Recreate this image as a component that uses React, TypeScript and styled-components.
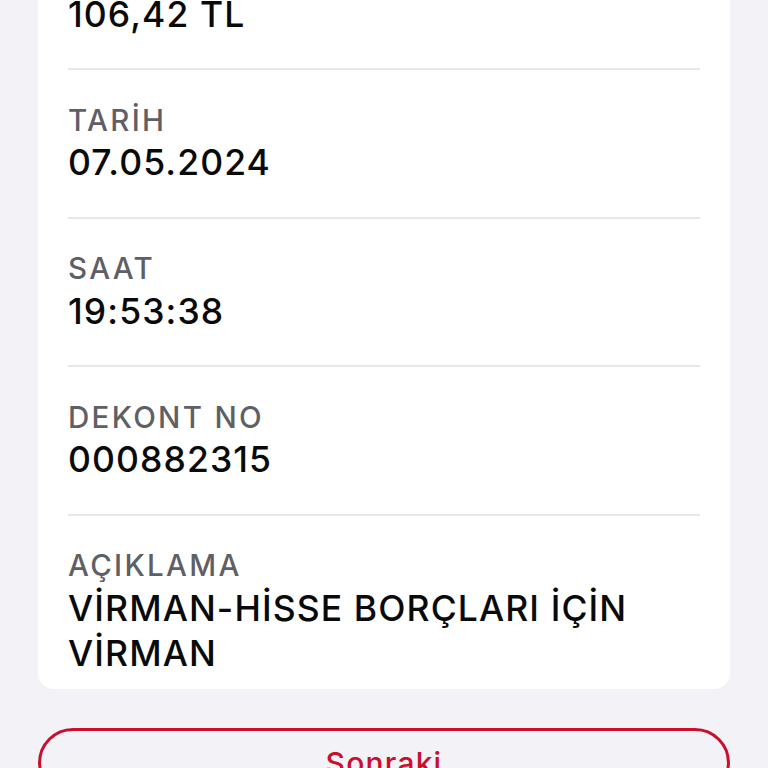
import React from 'react';
import styled, { createGlobalStyle } from 'styled-components';

const GlobalStyle = createGlobalStyle`
  html, body {
    margin: 0;
    padding: 0;
    background-color: #f2f2f7;
    font-family: Inter, "Noto Sans", "DejaVu Sans", sans-serif;
    -webkit-font-smoothing: antialiased;
  }
`;

// Styled components
const Screen = styled.div`
  min-height: 768px;
  background-color: #f2f2f7;
  padding: 0 38px;
  overflow: hidden;
`;

// the view is scrolled, so the top of the card sits above the window
const ScrolledContent = styled.div`
  margin-top: -78.5px;
  display: flex;
  flex-direction: column;
  gap: 39px;
`;

const Card = styled.div`
  background-color: #ffffff;
  border-radius: 16px;
  padding: 0 30px 13px;
`;

const Row = styled.div<{ last?: boolean }>`
  padding: 31.5px 0 ${props => (props.last ? '0' : '31.5px')};
  border-bottom: ${props => (props.last ? 'none' : '2px solid #e6e6eb')};
`;

const Label = styled.div`
  font-size: 29.5px;
  line-height: 36px;
  font-weight: 500;
  color: #5f5f66;
  text-transform: uppercase;
  letter-spacing: 2.3px;
`;

const Value = styled.div`
  margin-top: 2.5px;
  font-size: 35.5px;
  line-height: 45px;
  font-weight: 500;
  color: #0a0a0a;
  letter-spacing: 1.1px;
`;

const NextButton = styled.button`
  display: flex;
  align-items: center;
  justify-content: center;
  width: 100%;
  height: 70px;
  border: 3px solid #c8102e;
  border-radius: 35px;
  background: transparent;
  color: #c8102e;
  font-family: inherit;
  font-size: 30px;
  font-weight: 500;
  letter-spacing: 1.2px;
  cursor: pointer;
`;

interface Detail {
  label: string;
  value: string;
}

const details: Detail[] = [
  { label: 'Tutar', value: '106,42 TL' },
  { label: 'TARİH', value: '07.05.2024' },
  { label: 'SAAT', value: '19:53:38' },
  { label: 'DEKONT NO', value: '000882315' },
  { label: 'AÇIKLAMA', value: 'VİRMAN-HİSSE BORÇLARI İÇİN VİRMAN' },
];

const App: React.FC = () => {
  return (
    <>
      <GlobalStyle />
      <Screen>
        <ScrolledContent>
          <Card>
            {details.map((item, i) => (
              <Row key={item.label} last={i === details.length - 1}>
                <Label>{item.label}</Label>
                <Value>{item.value}</Value>
              </Row>
            ))}
          </Card>
          <NextButton type="button">Sonraki</NextButton>
        </ScrolledContent>
      </Screen>
    </>
  );
};

export default App;
